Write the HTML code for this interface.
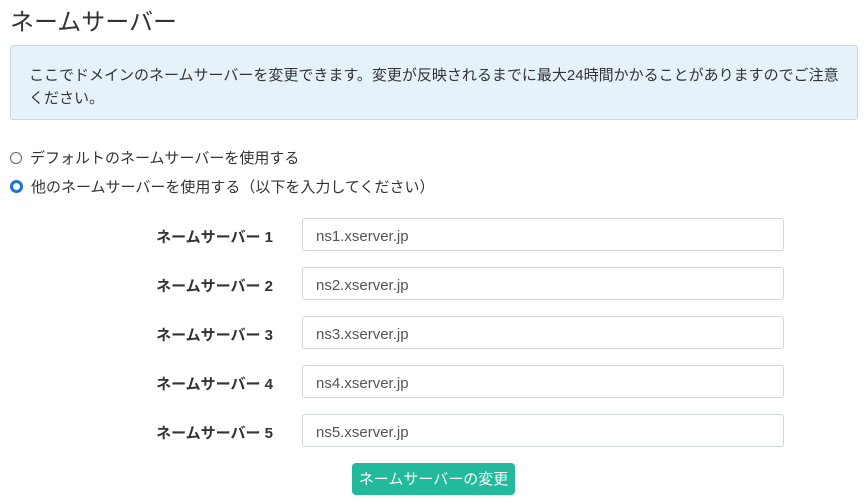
<!DOCTYPE html>
<html><head><meta charset="utf-8"><style>
body{margin:0;width:868px;height:503px;background:#fff;font-family:"Liberation Sans","Noto Sans CJK JP",sans-serif;color:#333;overflow:hidden;position:relative}
.t{position:absolute;left:10px;top:6px;font-size:24px;color:#333;line-height:34px}
.info{position:absolute;left:10px;top:45px;width:848px;height:75px;background:#e6f2fa;border:1px solid #c3d6e3;border-radius:3px;box-sizing:border-box;padding:18px 17px 0 18px;font-size:15px;line-height:23px;color:#333}
.r{position:absolute;left:10px;font-size:15px;line-height:20px}
.r i{display:inline-block;width:12px;height:12px;border:1px solid #666;border-radius:50%;vertical-align:-1px;margin-right:8px;box-sizing:border-box}
.r i.on{border:3.5px solid #1a73d6;background:#fff;width:13px;height:13px}
.l{position:absolute;left:140px;width:133px;text-align:right;font-weight:bold;font-size:15px;line-height:20px}
.in{position:absolute;left:302px;width:482px;height:33px;border:1px solid #cfd8df;border-radius:3px;box-sizing:border-box;padding-left:13px;font-size:15px;line-height:35px;color:#555}
.b{position:absolute;left:352px;top:463px;width:163px;height:32px;background:#22b99c;border-radius:4px;color:#fff;font-size:15px;text-align:center;line-height:34px}
</style></head><body>
<div class="t">ネームサーバー</div>
<div class="info">ここでドメインのネームサーバーを変更できます。変更が反映されるまでに最大24時間かかることがありますのでご注意ください。</div>
<div class="r" style="top:149px"><i></i>デフォルトのネームサーバーを使用する</div>
<div class="r" style="top:178px"><i class="on"></i>他のネームサーバーを使用する（以下を入力してください）</div>
<div class="l" style="top:228px">ネームサーバー 1</div><div class="in" style="top:218px">ns1.xserver.jp</div>
<div class="l" style="top:277px">ネームサーバー 2</div><div class="in" style="top:267px">ns2.xserver.jp</div>
<div class="l" style="top:326px">ネームサーバー 3</div><div class="in" style="top:316px">ns3.xserver.jp</div>
<div class="l" style="top:375px">ネームサーバー 4</div><div class="in" style="top:365px">ns4.xserver.jp</div>
<div class="l" style="top:424px">ネームサーバー 5</div><div class="in" style="top:414px">ns5.xserver.jp</div>
<div class="b">ネームサーバーの変更</div>
</body></html>
